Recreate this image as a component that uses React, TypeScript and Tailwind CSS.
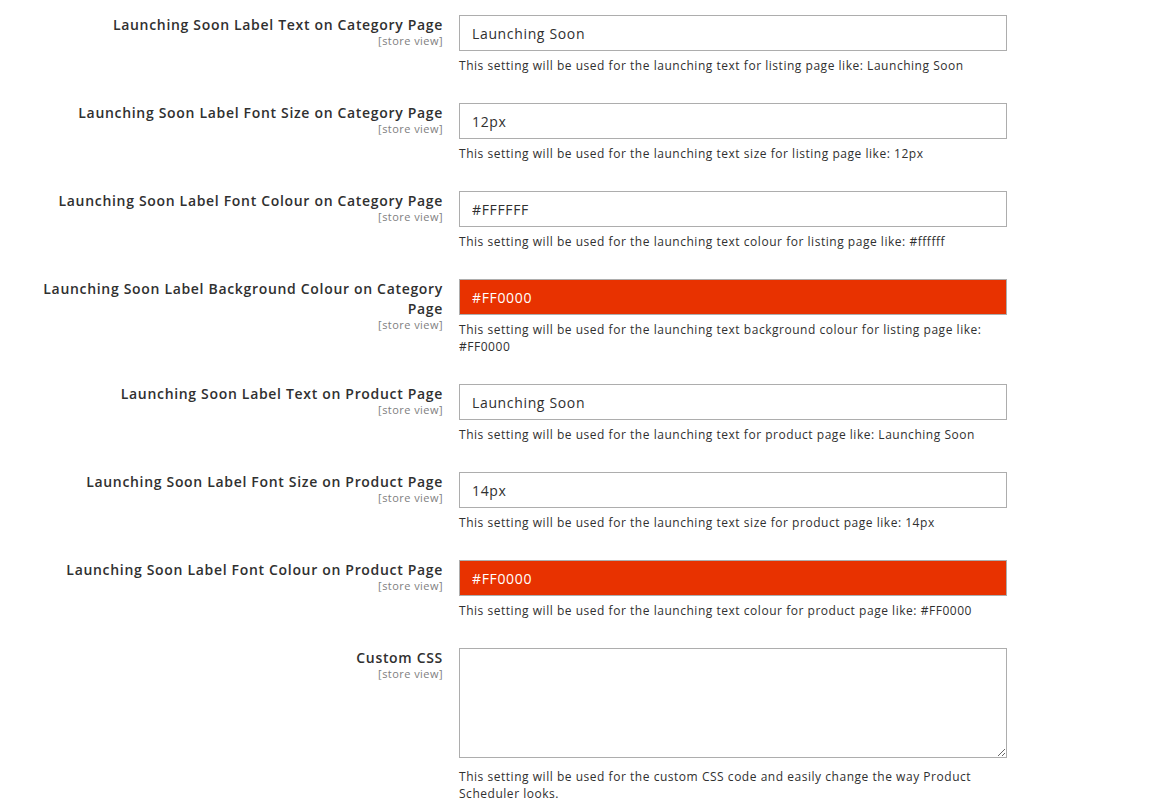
import {FC} from "react";

type Row = {
    label: string;
    value?: string;
    note: string;
    red?: boolean;
    textarea?: boolean;
};

const rows: Row[] = [
    {label: "Launching Soon Label Text on Category Page", value: "Launching Soon", note: "This setting will be used for the launching text for listing page like: Launching Soon"},
    {label: "Launching Soon Label Font Size on Category Page", value: "12px", note: "This setting will be used for the launching text size for listing page like: 12px"},
    {label: "Launching Soon Label Font Colour on Category Page", value: "#FFFFFF", note: "This setting will be used for the launching text colour for listing page like: #ffffff"},
    {label: "Launching Soon Label Background Colour on Category Page", value: "#FF0000", red: true, note: "This setting will be used for the launching text background colour for listing page like: #FF0000"},
    {label: "Launching Soon Label Text on Product Page", value: "Launching Soon", note: "This setting will be used for the launching text for product page like: Launching Soon"},
    {label: "Launching Soon Label Font Size on Product Page", value: "14px", note: "This setting will be used for the launching text size for product page like: 14px"},
    {label: "Launching Soon Label Font Colour on Product Page", value: "#FF0000", red: true, note: "This setting will be used for the launching text colour for product page like: #FF0000"},
    {label: "Custom CSS", textarea: true, note: "This setting will be used for the custom CSS code and easily change the way Product Scheduler looks."},
];

const ConfigRow: FC<{row: Row}> = ({row}) => (
    <div className="flex mb-[29px]">
        <div className="w-[443px] pl-[30px] shrink-0 text-right">
            <div className="text-[14px] leading-[20px] font-semibold tracking-[0.68px] text-[#303030]">{row.label}</div>
            <div className="text-[11px] leading-[11px] tracking-[0.45px] text-[#808080]">[store view]</div>
        </div>
        <div className="ml-[16px] w-[548px]">
            {row.textarea ? (
                <textarea
                    className="block w-[548px] h-[110px] border border-[#adadad] bg-white outline-none resize-y"
                />
            ) : (
                <input
                    type="text"
                    readOnly
                    value={row.value}
                    className={
                        row.red
                            ? "block w-[548px] h-[36px] px-[12px] border border-[#adadad] bg-[#e83200] text-white text-[14px] tracking-[0.65px] outline-none"
                            : "block w-[548px] h-[36px] px-[12px] border border-[#adadad] bg-white text-[#303030] text-[14px] tracking-[0.65px] outline-none"
                    }
                />
            )}
            <div className={row.textarea ? "mt-[10px] text-[12px] leading-[17px] tracking-[0.53px] text-[#303030]" : "mt-[6px] text-[12px] leading-[17px] tracking-[0.53px] text-[#303030]"}>
                {row.note}
            </div>
        </div>
    </div>
);

export default function App() {
    return (
        <div className="min-h-screen bg-white pt-[15px]" style={{fontFamily: '"Open Sans", "Noto Sans", sans-serif'}}>
            {rows.map((r) => (
                <ConfigRow key={r.label} row={r} />
            ))}
        </div>
    );
}
